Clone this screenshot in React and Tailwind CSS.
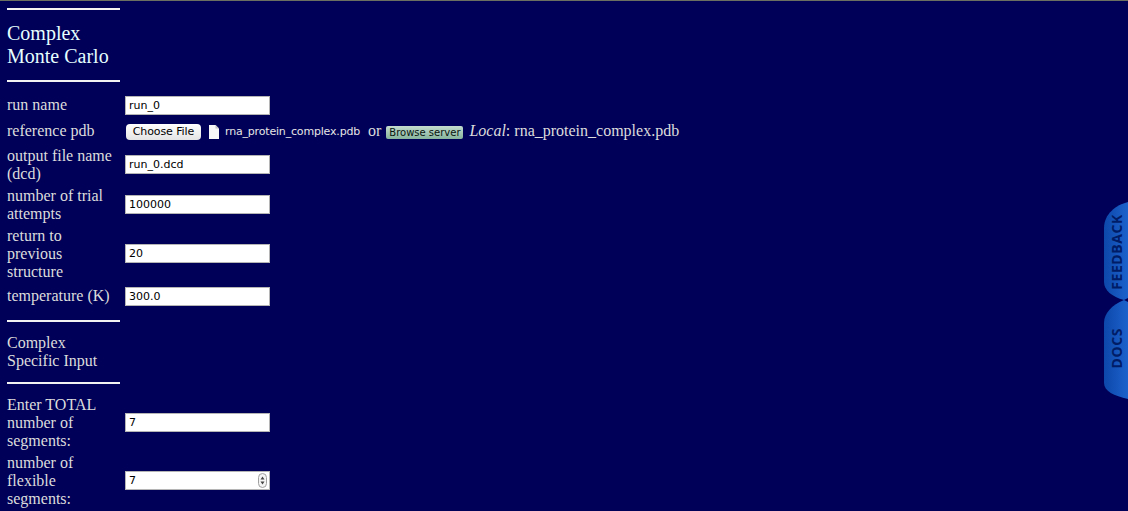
const Rule = () => <div className="h-[2px] w-[113px] bg-[#f2f2f2]" />;

const inputClass =
  "block h-[19px] w-[145px] border border-[#b5b5b5] bg-white pl-[3px] text-[11px] text-black outline-none [font-family:'DejaVu_Sans',sans-serif]";

function Row({ label, value, h, spin, single }) {
  return (
    <div className={`flex items-center ${h}`}>
      <div className="w-[118px] shrink-0 leading-[18px]">{label}</div>
      <div className={single ? "relative -mb-[1px]" : "relative mb-[1px]"}>
        <input readOnly value={value} className={inputClass} />
        {spin && (
          <svg className="absolute right-[3px] top-[2px]" width="9" height="15" viewBox="0 0 9 15">
            <rect x="0.5" y="0.5" width="8" height="14" rx="4" fill="#f4f4f4" stroke="#a0a0a0" />
            <path d="M4.5 3.5 L6.5 6.5 H2.5 Z M4.5 11.5 L2.5 8.5 H6.5 Z" fill="#444" />
          </svg>
        )}
      </div>
    </div>
  );
}

function Tab({ label, d, y, h }) {
  return (
    <svg className={`absolute right-0 ${y}`} width="24" height={h} viewBox={`0 0 24 ${h}`}>
      <defs>
        <linearGradient id={`g${label}`} x1="0" x2="1" y1="0" y2="0">
          <stop offset="0" stopColor="#0d47aa" />
          <stop offset="1" stopColor="#1c62cc" />
        </linearGradient>
      </defs>
      <path d={d} fill={`url(#g${label})`} />
    </svg>
  );
}

export default function App() {
  return (
    <div className="relative h-[511px] w-[1128px] overflow-hidden border-t border-[#6b6f62] bg-[#000058] text-[16px] text-[#dcdcdc] [font-family:'Liberation_Serif',serif]">
      <div className="flex flex-col pl-[7px] pt-[7px]">
        <Rule />
        <div className="mt-[12px] text-[20px] leading-[23px] text-[#e6ffff]">
          Complex
          <br />
          Monte Carlo
        </div>
        <div className="mt-[12px]">
          <Rule />
        </div>
        <div className="mt-[12px] flex flex-col gap-y-[4px]">
          <Row label="run name" value="run_0" h="h-[21px]" single />
          <div className="mt-[2px] flex h-[22px] items-center">
            <div className="mb-[2px] w-[118px] shrink-0 leading-[18px]">reference pdb</div>
            <button className="ml-[1px] h-[16px] w-[75px] rounded-[4px] bg-gradient-to-b from-white to-[#e4e4e4] text-[11px] leading-[16px] tracking-[-0.1px] text-black [font-family:'DejaVu_Sans',sans-serif]">
              Choose File
            </button>
            <svg className="ml-[8px]" width="10" height="14" viewBox="0 0 10 14">
              <path d="M0 0 H6.5 L10 3.5 V14 H0 Z" fill="#f7f7f7" />
              <path d="M6.5 0 V3.5 H10 Z" fill="#c4c4c4" />
            </svg>
            <span className="ml-[6px] text-[11px] tracking-[-0.18px] text-[#e6e6e6] [font-family:'DejaVu_Sans',sans-serif]">rna_protein_complex.pdb</span>
            <span className="mb-[2px] ml-[8px]">or</span>
            <span className="ml-[5px] flex h-[13px] w-[77px] items-center justify-center rounded-[2px] bg-gradient-to-b from-[#c4dccf] to-[#86b39c] text-[10px] text-[#08140e] [font-family:'DejaVu_Sans',sans-serif]">
              Browse server
            </span>
            <span className="mb-[2px] ml-[6px]"><i>Local</i>: rna_protein_complex.pdb</span>
          </div>
          <Row label={<>output file name<br />(dcd)</>} value="run_0.dcd" h="h-[36px]" />
          <Row label={<>number of trial<br />attempts</>} value="100000" h="h-[36px]" />
          <Row label={<>return to<br />previous<br />structure</>} value="20" h="h-[54px]" />
          <Row label="temperature (K)" value="300.0" h="h-[21px]" single />
        </div>
        <div className="mt-[14px]">
          <Rule />
        </div>
        <div className="mt-[12px] leading-[18px]">
          Complex
          <br />
          Specific Input
        </div>
        <div className="mt-[12px]">
          <Rule />
        </div>
        <div className="mt-[12px] flex flex-col gap-y-[4px]">
          <Row label={<>Enter TOTAL<br />number of<br />segments:</>} value="7" h="h-[54px]" />
          <Row label={<>number of<br />flexible<br />segments:</>} value="7" h="h-[54px]" spin />
        </div>
      </div>

      <Tab label="feedback" y="top-[201px]" h={100} d="M24 0 C12 3 0 12 0 26 V80 C0 88 8 95 20 98 L24 96 Z" />
      <Tab label="docs" y="top-[298px]" h={100} d="M20 1 L24 3 V100 C10 97 0 92 0 84 V24 C0 14 8 6 20 1 Z" />
      <span className="absolute left-[1109px] top-[213px] text-[14px] leading-[16px] font-bold tracking-[0.6px] text-[#001c66] [font-family:'Open_Sans',sans-serif] [writing-mode:vertical-rl] rotate-180">
        FEEDBACK
      </span>
      <span className="absolute left-[1109px] top-[327px] text-[14px] leading-[16px] font-bold tracking-[0.6px] text-[#001c66] [font-family:'Open_Sans',sans-serif] [writing-mode:vertical-rl] rotate-180">
        DOCS
      </span>
    </div>
  );
}
